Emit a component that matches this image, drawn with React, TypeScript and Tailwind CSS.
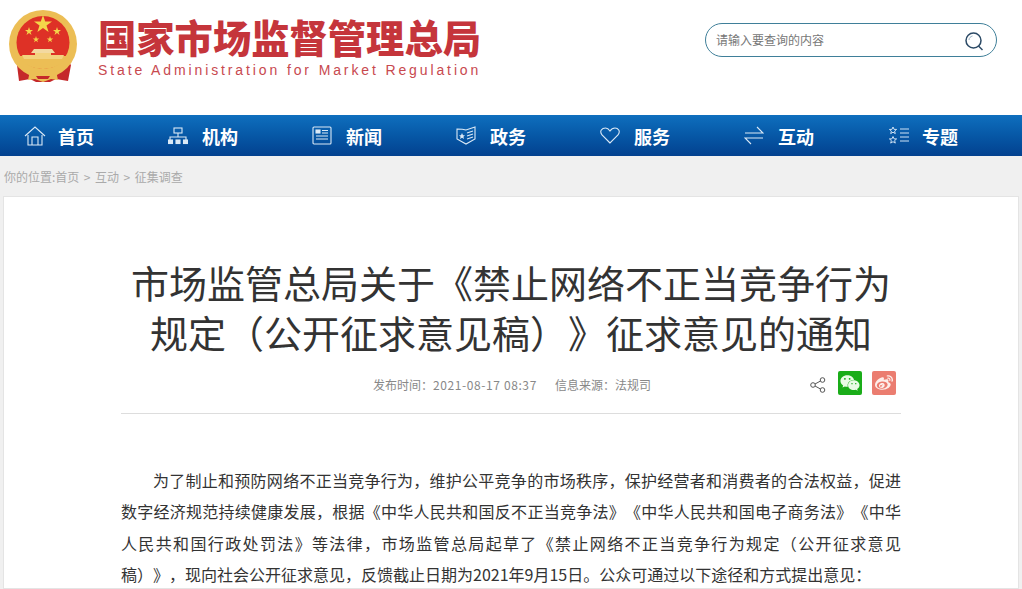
import React from "react";
import { FaWeixin, FaWeibo } from "react-icons/fa";

const Emblem = () => (
  <svg width="72" height="76" viewBox="0 0 72 76" className="shrink-0">
    <path d="M14 50 L9 56 L11 72 L22 70 L28 73 L42 73 L48 70 L60 72 L63 56 L58 50 Z" fill="#c5282a" />
    <circle cx="35" cy="35" r="34" fill="#ecbe55" />
    <circle cx="35" cy="33.500" r="26.500" fill="#de3126" />
    <path d="M11 47 H59 C55 55 46 60 35 60 C24 60 15 55 11 47Z" fill="#ecbe55" />
    <path d="M14 46 H56 L54 50 H16Z" fill="#f3d27e" />
    <path d="M26 40 H44 L47 44 H23Z" fill="#f3d9a0" />
    <rect x="27" y="44" width="16" height="3" fill="#f3d27e" />
    <path d="M35 6 L37.200 12.600 L44 12.600 L38.500 16.600 L40.600 23 L35 19 L29.400 23 L31.500 16.600 L26 12.600 L32.800 12.600Z" fill="#f4d54a" />
    <path d="M21 18 l1 3 h3 l-2.500 2 l1 3 l-2.500 -2 l-2.500 2 l1 -3 l-2.500 -2 h3Z" fill="#f4d54a" />
    <path d="M49 18 l1 3 h3 l-2.500 2 l1 3 l-2.500 -2 l-2.500 2 l1 -3 l-2.500 -2 h3Z" fill="#f4d54a" />
    <path d="M28 27 l.8 2.400 h2.400 l-2 1.500 l.8 2.400 l-2 -1.500 l-2 1.500 l.8 -2.400 l-2 -1.500 h2.400Z" fill="#f4d54a" />
    <path d="M42 27 l.8 2.400 h2.400 l-2 1.500 l.8 2.400 l-2 -1.500 l-2 1.500 l.8 -2.400 l-2 -1.500 h2.400Z" fill="#f4d54a" />
    <path d="M22 62 C27 57 31 59 35 62 C39 59 43 57 48 62 L50 71 L43 70 L35 73 L27 70 L20 71Z" fill="#ecbe55" />
    <path d="M28 67 H42 L40 70 H30Z" fill="#c5282a" />
  </svg>
);

const ic = { fill: "none", stroke: "#dbe9f6", strokeWidth: 1.1 };

const HomeIcon = () => (
  <svg width="22" height="20" viewBox="0 0 22 20" {...ic}>
    <path d="M1 10 L11 1 L21 10" />
    <path d="M4 9 V19 H18 V9" />
    <path d="M8 19 V11 H14 V19" />
  </svg>
);
const OrgIcon = () => (
  <svg width="20" height="18" viewBox="0 0 20 18" {...ic}>
    <rect x="6" y="1" width="8" height="5" />
    <path d="M10 6 V10 M2 13 V10 H18 V13" />
    <rect x="0.500" y="13" width="4" height="3.500" fill="#dbe9f6" />
    <rect x="8" y="13" width="4" height="3.500" fill="#dbe9f6" />
    <rect x="15.500" y="13" width="4" height="3.500" fill="#dbe9f6" />
  </svg>
);
const NewsIcon = () => (
  <svg width="20" height="19" viewBox="0 0 20 19" {...ic}>
    <rect x="1" y="1" width="18" height="17" rx="1" />
    <rect x="4" y="4" width="4" height="3" fill="#dbe9f6" />
    <path d="M10 4.500 H16 M10 7 H16 M4 10 H16 M4 13 H16" />
  </svg>
);
const GovIcon = () => (
  <svg width="20" height="19" viewBox="0 0 20 19" {...ic}>
    <path d="M1 3 C4 3 7 3 10 4 C13 3 16 2 19 1 V13 L10 18 L1 13Z" />
    <path d="M6 7 l1 2.200 h2 l-1.600 1.500 l.6 2.300 l-2 -1.300 l-2 1.300 l.6 -2.300 l-1.600 -1.500 h2Z" fill="#dbe9f6" stroke="none" />
    <path d="M11 7 L17 5 M11 10 L17 8 M11 13 L17 11" />
  </svg>
);
const HeartIcon = () => (
  <svg width="20" height="17" viewBox="0 0 20 17" {...ic}>
    <path d="M10 16 L2 8 C-1 4 2 1 5.500 1 C8 1 9 2.500 10 4 C11 2.500 13 1 15 1 C18 1 21 4 18 8Z" />
  </svg>
);
const SwapIcon = () => (
  <svg width="20" height="19" viewBox="0 0 20 19" {...ic}>
    <path d="M1 7 H19 L13 1" />
    <path d="M19 12 H1 L7 18" />
  </svg>
);
const TopicIcon = () => (
  <svg width="22" height="19" viewBox="0 0 22 19" fill="none" stroke="#cfe2f5" strokeWidth="1">
    <path d="M5 1 l1.100 2.400 h2.500 l-2 1.700 l.7 2.500 l-2.300 -1.400 l-2.300 1.400 l.7 -2.500 l-2 -1.700 h2.500Z" />
    <path d="M5 10.500 l1.100 2.400 h2.500 l-2 1.700 l.7 2.500 l-2.300 -1.400 l-2.300 1.400 l.7 -2.500 l-2 -1.700 h2.500Z" />
    <path d="M12 3 H21 M12 7 H21 M12 11 H21 M12 15 H21" />
  </svg>
);

const nav: [React.ReactNode, string][] = [
  [<HomeIcon />, "首页"],
  [<OrgIcon />, "机构"],
  [<NewsIcon />, "新闻"],
  [<GovIcon />, "政务"],
  [<HeartIcon />, "服务"],
  [<SwapIcon />, "互动"],
  [<TopicIcon />, "专题"],
];

export default function App() {
  return (
    <div className="h-[589px] w-[1022px] overflow-hidden bg-[#f0f0f0] font-['Noto_Sans_CJK_SC','Liberation_Sans',sans-serif] [text-spacing-trim:space-all]">
      <header className="flex h-[115px] items-start justify-between bg-white pl-2 pr-[25px]">
        <div className="flex items-start gap-[18px] pt-[9px]">
          <Emblem />
          <div className="pt-[7px]">
            <div className="text-[38.300px] leading-[42px] font-black whitespace-nowrap text-[#c5353b]">国家市场监督管理总局</div>
            <div className="mt-[3px] font-['Liberation_Sans',sans-serif] text-[14px] leading-[18px] tracking-[2.880px] whitespace-nowrap text-[#c8494f]">
              State Administration for Market Regulation
            </div>
          </div>
        </div>
        <div className="mt-[23px] flex h-[34px] w-[292px] items-center justify-between rounded-[17px] border border-[#3f7f99] pr-[12px] pl-[10px]">
          <span className="text-[12px] text-[#777]">请输入要查询的内容</span>
          <svg width="19" height="19" viewBox="0 0 19 19" fill="none" stroke="#2c4a66" strokeWidth="1.500" className="mt-[2px]">
            <circle cx="8.500" cy="8.500" r="7.500" />
            <path d="M13.500 14 L17.500 18" />
            <path d="M4 8 C4 6 5.500 4.500 7.500 4" stroke="#9db4c6" strokeWidth="1" />
          </svg>
        </div>
      </header>

      <nav className="flex h-[41px] items-center bg-gradient-to-b from-[#0f6fbe] to-[#03418f] pl-[24px]">
        {nav.map(([icon, label]) => (
          <div key={label} className="flex w-[144px] shrink-0 items-center">
            <div className="flex w-[34px] shrink-0 items-center">{icon}</div>
            <span className="text-[18px] leading-[24px] font-bold text-white">{label}</span>
          </div>
        ))}
      </nav>

      <div className="flex h-[40px] items-center gap-[4.500px] pt-[2px] pl-1 text-[12px] whitespace-nowrap text-[#aaa]">
        <span>你的位置:首页</span>
        <span>&gt;</span>
        <span>互动</span>
        <span>&gt;</span>
        <span>征集调查</span>
      </div>

      <main className="mx-[3px] h-[393px] border border-[#e4e4e4] bg-white px-[117px] pt-[60px]">
        <h1 className="text-center text-[38px] leading-[50px] font-normal text-[#333]">
          市场监管总局关于《禁止网络不正当竞争行为
          <br />
          规定（公开征求意见稿）》征求意见的通知
        </h1>
        <div className="flex h-[57px] items-center justify-between border-b border-[#ddd]">
          <div className="flex gap-[18px] pl-[252px] text-[12px] text-[#888]">
            <span>
              发布时间：<span className="tracking-[0.600px]">2021-08-17 08:37</span>
            </span>
            <span>信息来源：法规司</span>
          </div>
          <div className="flex items-center pr-[5px]">
            <svg width="16" height="16" viewBox="0 0 16 16" fill="none" stroke="#555" strokeWidth="1">
              <circle cx="3" cy="8" r="2.300" />
              <circle cx="12.500" cy="3" r="2.300" />
              <circle cx="12.500" cy="13" r="2.300" />
              <path d="M5 7 L10.500 4 M5 9 L10.500 12" />
            </svg>
            <div className="mb-[4px] ml-[12px] flex h-[24px] w-[24px] items-center justify-center rounded-[2px] bg-[#1aad19]">
              <FaWeixin className="text-[20px] text-[#e9fbe6]" />
            </div>
            <div className="mb-[4px] ml-[10px] flex h-[24px] w-[24px] items-center justify-center rounded-[2px] bg-[#eb7d70]">
              <FaWeibo className="text-[18px] text-[#fdeeea]" />
            </div>
          </div>
        </div>
        <p className="mt-[51px] text-justify indent-[32px] text-[16px] leading-[31.400px] text-[#333]">
          为了制止和预防网络不正当竞争行为，维护公平竞争的市场秩序，保护经营者和消费者的合法权益，促进数字经济规范持续健康发展，根据《中华人民共和国反不正当竞争法》《中华人民共和国电子商务法》《中华人民共和国行政处罚法》等法律，市场监管总局起草了《禁止网络不正当竞争行为规定（公开征求意见稿）》，现向社会公开征求意见，反馈截止日期为2021年9月15日。公众可通过以下途径和方式提出意见：
        </p>
      </main>
    </div>
  );
}
